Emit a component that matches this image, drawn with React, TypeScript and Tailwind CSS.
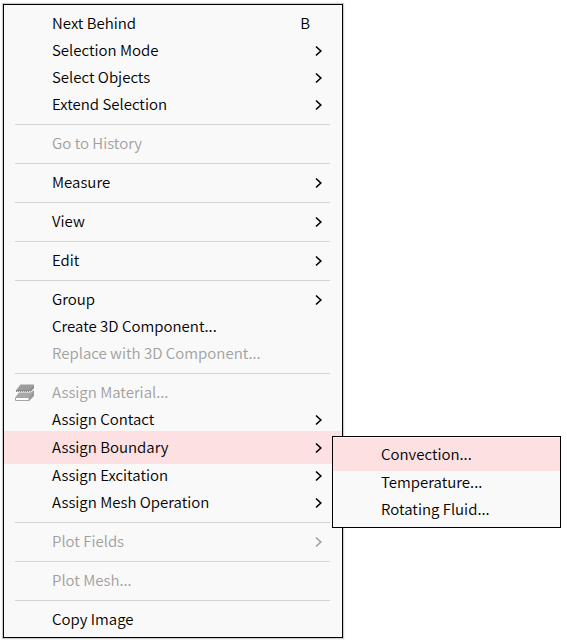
import React from 'react';

interface MenuItem {
  label: string;
  shortcut?: string;
  icon?: React.ReactNode;
  disabled?: boolean;
  active?: boolean;
  hasSubmenu?: boolean;
  submenu?: MenuItem[];
}

const MaterialIcon = () => (
  <svg width="20" height="18" viewBox="0 0 20 18" aria-hidden="true">
    <path d="M5.5 0.5H19V4L15.5 7H0.5Z" fill="#9c9c9c" />
    <path d="M1 6H14.5L19 2V4L15 8H1Z" fill="#8a8a8a" />
    <path d="M2 7.5H15" fill="none" stroke="#dedede" strokeDasharray="1 1" />
    <path d="M4 8.5H15L19 6V9L14.5 13H0.5Z" fill="#a9a9a9" />
    <path d="M0.5 13.5H14V16.5H0.5Z" fill="#fff" stroke="#a5a5a5" />
    <path d="M14 17L19 12V7.5L14 13Z" fill="#999" />
  </svg>
);

const Chevron = () => (
  <svg width="8" height="12" viewBox="0 0 8 12" fill="none" stroke="currentColor" strokeWidth="1.6" aria-hidden="true">
    <path d="M2 1.5L6.8 6L2 10.5" />
  </svg>
);

const groups: MenuItem[][] = [
  [
    { label: 'Next Behind', shortcut: 'B' },
    { label: 'Selection Mode', hasSubmenu: true },
    { label: 'Select Objects', hasSubmenu: true },
    { label: 'Extend Selection', hasSubmenu: true },
  ],
  [{ label: 'Go to History', disabled: true }],
  [{ label: 'Measure', hasSubmenu: true }],
  [{ label: 'View', hasSubmenu: true }],
  [{ label: 'Edit', hasSubmenu: true }],
  [
    { label: 'Group', hasSubmenu: true },
    { label: 'Create 3D Component...' },
    { label: 'Replace with 3D Component...', disabled: true },
  ],
  [
    { label: 'Assign Material...', icon: <MaterialIcon />, disabled: true },
    { label: 'Assign Contact', hasSubmenu: true },
    {
      label: 'Assign Boundary',
      active: true,
      hasSubmenu: true,
      submenu: [
        { label: 'Convection...', active: true },
        { label: 'Temperature...' },
        { label: 'Rotating Fluid...' },
      ],
    },
    { label: 'Assign Excitation', hasSubmenu: true },
    { label: 'Assign Mesh Operation', hasSubmenu: true },
  ],
  [{ label: 'Plot Fields', hasSubmenu: true, disabled: true }],
  [{ label: 'Plot Mesh...', disabled: true }],
  [{ label: 'Copy Image' }],
];

const MenuRow: React.FC<{ item: MenuItem }> = ({ item }) => (
  <li className={`relative ${item.active ? '-my-[2px]' : ''}`}>
    <button
      type="button"
      disabled={item.disabled}
      className={`flex w-full items-center pr-5 text-left ${item.active ? 'h-[33px] bg-[#fce0e2]' : 'h-[27px]'} ${
        item.disabled ? 'text-[#a0a0a0]' : 'text-black'
      }`}
    >
      <span className="flex w-12 shrink-0 pl-[11px]">{item.icon}</span>
      <span className="flex-1 whitespace-nowrap">{item.label}</span>
      {item.shortcut && <span className="mr-3">{item.shortcut}</span>}
      {item.hasSubmenu && <Chevron />}
    </button>
    {item.submenu && (
      <ul className="absolute top-[5px] left-full z-10 -ml-[10px] w-[229px] border border-black bg-[#f9f9f9] pt-[3px] pb-1">
        {item.submenu.map((sub) => (
          <MenuRow key={sub.label} item={sub} />
        ))}
      </ul>
    )}
  </li>
);

const App = () => (
  <main className="min-h-screen bg-white px-[3px] py-1 font-['Noto_Sans_CJK_KR',sans-serif] text-[15px] font-[350]">
    <nav
      aria-label="Context menu"
      className="w-[340px] max-w-full border border-black bg-[#f9f9f9] pt-[5px] pb-1 shadow-[0_0_1px_1px_#ccc]"
    >
      {groups.map((items, i) => (
        <React.Fragment key={items[0].label}>
          {i > 0 && <hr className="mt-[6px] mb-[5px] mr-3 ml-[11px] border-t border-[#d4d4d4]" />}
          <ul>
            {items.map((item) => (
              <MenuRow key={item.label} item={item} />
            ))}
          </ul>
        </React.Fragment>
      ))}
    </nav>
  </main>
);

export default App;
